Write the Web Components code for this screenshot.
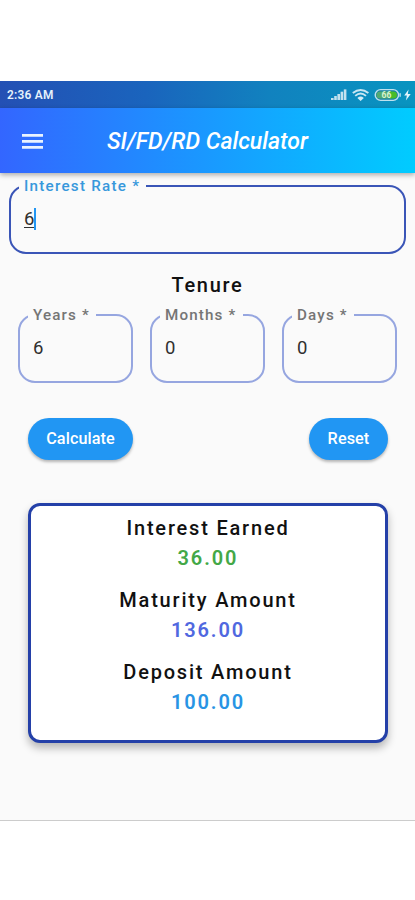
<!DOCTYPE html>
<html lang="en">
<head>
<meta charset="utf-8">
<title>SI/FD/RD Calculator</title>
<style>
html,body{margin:0;background:#fff}
body{width:415px;height:900px;overflow:hidden;font-family:Roboto,"Liberation Sans",sans-serif}
</style>
</head>
<body>
<calc-app></calc-app>
<script>
const define = (name, html) => customElements.define(name, class extends HTMLElement {
  constructor() {
    super();
    this.attachShadow({ mode: 'open' }).innerHTML = html;
  }
});

define('status-bar', `
<style>
:host{display:flex;align-items:center;justify-content:space-between;box-sizing:border-box;height:27px;padding:2px 3px 0 7px;color:#e6f1fb;
background:linear-gradient(90deg,#2450b4 0%,#1a64bd 35%,#1182bf 65%,#0894c0 100%)}
span{font-size:11.9px;font-weight:600;line-height:14px;letter-spacing:.25px;margin-top:-1px;white-space:nowrap}
svg{display:block;margin-top:-2px}
text{font:700 8.5px Roboto,sans-serif}
</style>
<span>2:36 AM</span>
<svg width="81" height="16" viewBox="0 0 81 16">
<g fill="#c3e2ef"><rect x="0" y="11" width="2.6" height="2"/><rect x="3.2" y="9" width="2.6" height="4"/><rect x="6.4" y="7" width="2.6" height="6"/><rect x="9.6" y="4.7" width="2.6" height="8.3"/><rect x="12.8" y="2.4" width="2.6" height="10.6"/></g>
<g fill="none" stroke="#c9e6f3" stroke-width="1.9"><path d="M21.8 6.1q7.8-6.3 15.6 0"/><path d="M24.2 8.9q5.4-4.6 10.8 0"/></g>
<path d="M26.4 10.9q3.2-2.7 6.4 0L29.6 14z" fill="#d5edf7"/>
<rect x="44.2" y="2.6" width="23.4" height="10.8" rx="5.4" fill="#127fa8" stroke="#bfe1ee" stroke-width="1.4"/>
<path d="M49 4.4h11v7.2H49a3.6 3.6 0 0 1 0-7.2z" fill="#52aa72"/>
<path d="M59 4.4h3.4a3.6 3.6 0 0 1 0 7.2H59z" fill="#48bd29"/>
<text x="50.6" y="11" fill="#d9f4d0">66</text>
<rect x="68.4" y="6.2" width="1.4" height="3.6" fill="#bfe1ee"/>
<path d="M77.6 2.6l-4.4 6h2.7l-1 4.8 4.8-6.3h-2.9z" fill="#e3f5fc"/>
</svg>`);

define('app-bar', `
<style>
:host{display:flex;align-items:center;box-sizing:border-box;height:65px;padding:3px 0 0 22px;color:#fff;position:relative;z-index:1;
background:linear-gradient(90deg,#3366ff 0%,#00ccff 100%);box-shadow:0 2px 5px rgba(0,0,0,.32)}
svg{display:block;width:21px;height:15px;margin:-1px 64px 0 0}
h1{margin:0;font-size:23.1px;line-height:28px;font-weight:500;font-style:italic;white-space:nowrap}
</style>
<svg viewBox="0 0 21 15"><path d="M0 1.4h21M0 7.4h21M0 13.4h21" stroke="#e9f3ff" stroke-width="2.6"/></svg>
<h1><slot></slot></h1>`);

define('outlined-field', `
<style>
:host{display:block;min-width:0}
fieldset{margin:0;min-width:0;box-sizing:border-box;height:var(--h,77px);border:2px solid var(--line,#96a6e0);border-radius:17px;padding:0 0 0 var(--pl,8px)}
legend{font-size:15.2px;line-height:18px;height:18px;font-weight:500;letter-spacing:var(--ls,1.15px);color:var(--label,#757575);padding:0 5px;white-space:nowrap;box-sizing:border-box;width:var(--gap)}
.v{padding:13px 0 0 5px;font-size:18.5px;line-height:22px;color:#303030;display:flex;align-items:center}
</style>
<fieldset><legend><slot name="label"></slot></legend><div class="v"><slot></slot></div></fieldset>`);

define('text-caret', `
<style>:host{display:block;width:2px;height:22px;background:#2196f3}</style>`);

define('pill-button', `
<style>
:host{display:block}
button{display:block;box-sizing:border-box;width:100%;height:42px;border:0;border-radius:21px;padding:0;background:#2196f3;color:#fff;
font:500 16.2px/42px Roboto,sans-serif;letter-spacing:.1px;box-shadow:0 2px 3px rgba(0,0,0,.28)}
</style>
<button><slot></slot></button>`);

define('result-row', `
<style>
:host{display:block;height:72px;text-align:center;font-weight:500;white-space:nowrap}
div{font-size:20px;line-height:30px;letter-spacing:1.8px;color:#111}
.v{color:var(--c);font-weight:600;letter-spacing:1.9px}
</style>
<div><slot name="label"></slot></div><div class="v"><slot></slot></div>`);

define('result-card', `
<style>
:host{display:block;box-sizing:border-box;height:240px;border:3px solid #2440a8;border-radius:12px;background:#fff;padding-top:7px;
box-shadow:0 5px 8px rgba(0,0,0,.28)}
</style>
<slot></slot>`);

define('calc-app', `
<style>
:host{display:flex;flex-direction:column;box-sizing:border-box;height:900px;padding-top:81px;background:#fff}
main{height:648px;box-sizing:border-box;background:#fafafa;border-bottom:1.5px solid #ccc;padding-top:4px}
.rate{margin:0 9px;--h:77px;--line:#3a55b7;--label:#3798dc;--gap:127px;--ls:1.25px}
.rate u{text-decoration-thickness:1px;text-underline-offset:2px}
h2{margin:18px 0 0;text-align:center;font-size:20px;line-height:26px;font-weight:500;letter-spacing:1.7px;color:#111}
.tenure{display:grid;grid-template-columns:repeat(3,115px);gap:17px;margin:8px 18px 0}
.actions{display:flex;justify-content:space-between;margin:35px 27px 0 28px}
result-card{margin:43px 27px 0 28px}
</style>
<status-bar></status-bar>
<app-bar>SI/FD/RD Calculator</app-bar>
<main>
<outlined-field class="rate"><span slot="label">Interest Rate *</span><u>6</u><text-caret></text-caret></outlined-field>
<h2>Tenure</h2>
<div class="tenure">
<outlined-field style="--gap:68px"><span slot="label">Years *</span>6</outlined-field>
<outlined-field style="--gap:83px"><span slot="label">Months *</span>0</outlined-field>
<outlined-field style="--gap:62px"><span slot="label">Days *</span>0</outlined-field>
</div>
<div class="actions"><pill-button style="width:105px">Calculate</pill-button><pill-button style="width:79px">Reset</pill-button></div>
<result-card>
<result-row style="--c:#43a847"><span slot="label">Interest Earned</span>36.00</result-row>
<result-row style="--c:#5068e0"><span slot="label">Maturity Amount</span>136.00</result-row>
<result-row style="--c:#2894e4"><span slot="label">Deposit Amount</span>100.00</result-row>
</result-card>
</main>`);
</script>
</body>
</html>
